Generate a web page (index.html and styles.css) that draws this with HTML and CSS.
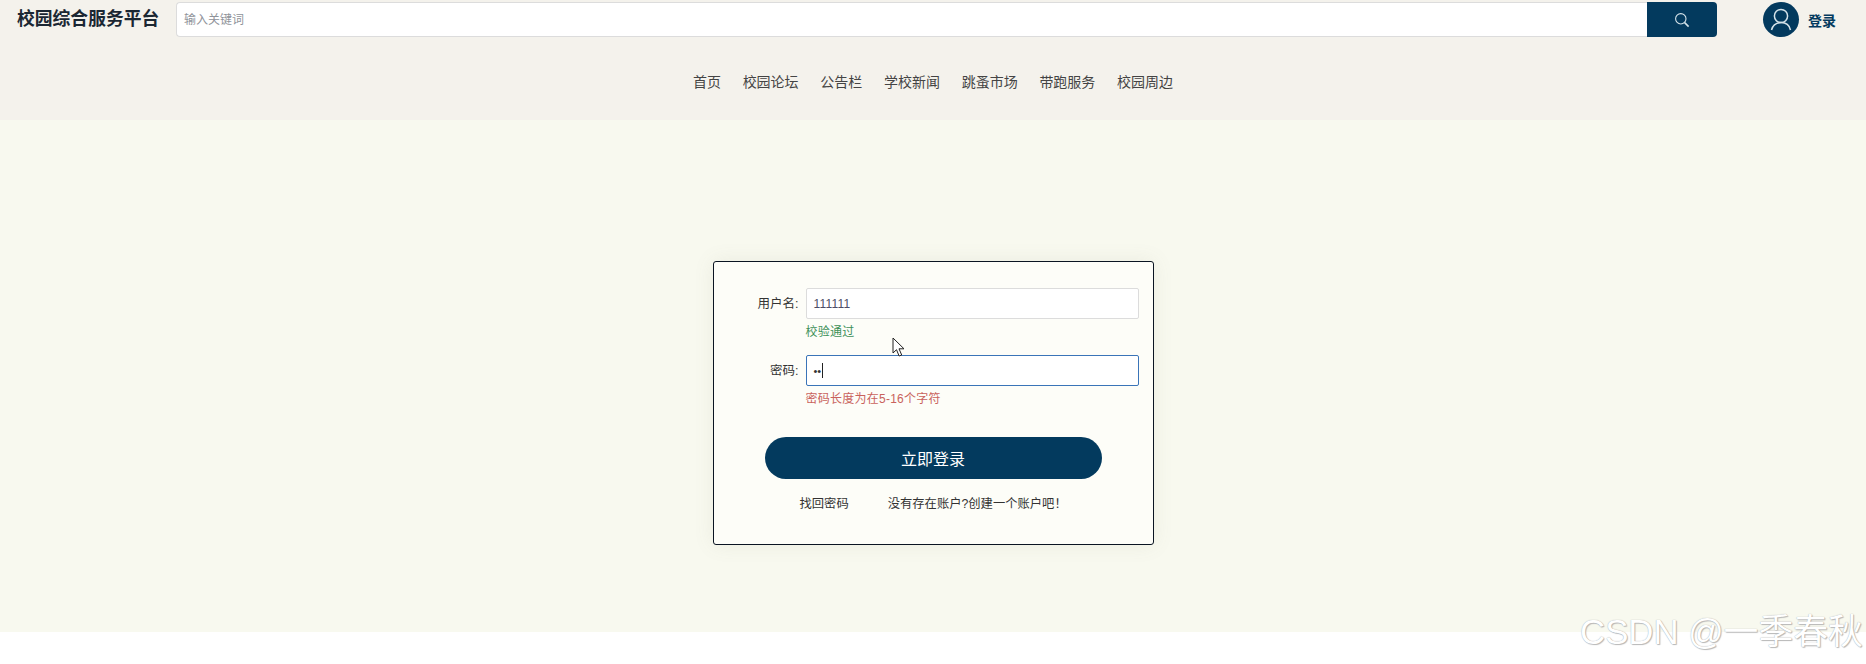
FILE: index.html
```html
<!DOCTYPE html>
<html lang="zh-CN">
<head>
<meta charset="utf-8">
<title>校园综合服务平台</title>
<link rel="stylesheet" href="styles.css">
</head>
<body>
<header class="header">
  <div class="topbar">
    <div class="logo">校园综合服务平台</div>
    <div class="search">
      <input class="search-input" type="text" placeholder="输入关键词">
      <button class="search-btn" type="button" aria-label="搜索">
        <svg width="16" height="16" viewBox="0 0 16 16" fill="none" stroke="#d5e3ea" stroke-width="1.1"><circle cx="6.8" cy="6.8" r="5.2"/><path d="M10.6 10.6l4 4" stroke-width="1.6"/></svg>
      </button>
    </div>
    <div class="user">
      <span class="avatar">
        <svg width="36" height="35" viewBox="0 0 36 35" fill="none" stroke="#d5e3ea" stroke-width="1.5"><circle cx="18" cy="14" r="6.6"/><path d="M8.5 28c1.2-5.2 5-7.4 9.5-7.4s8.3 2.2 9.5 7.4"/></svg>
      </span>
      <span class="user-name">登录</span>
    </div>
  </div>
  <nav class="nav">
    <a>首页</a><a>校园论坛</a><a>公告栏</a><a>学校新闻</a><a>跳蚤市场</a><a>带跑服务</a><a>校园周边</a>
  </nav>
</header>
<main class="main">
  <form class="card">
    <div class="row">
      <label class="label">用户名:</label>
      <div class="field">
        <div class="input">111111</div>
        <div class="msg msg-ok">校验通过</div>
      </div>
    </div>
    <div class="row">
      <label class="label">密码:</label>
      <div class="field">
        <div class="input input-focus"><span class="dots">••</span><span class="caret"></span></div>
        <div class="msg msg-err">密码长度为在5-16个字符</div>
      </div>
    </div>
    <button class="submit" type="button">立即登录</button>
    <div class="links"><a>找回密码</a><a>没有存在账户?创建一个账户吧！</a></div>
  </form>
</main>
<svg class="cursor" width="14" height="21" viewBox="0 0 14 21"><path d="M1 1v15l3.5-3.3 2.6 6.3 2.6-1-2.7-6.2H12z" fill="#fff" stroke="#222" stroke-width="1"/></svg>
<div class="watermark">CSDN @一季春秋</div>
</body>
</html>
```
FILE: styles.css
```css
* { box-sizing: border-box; }
html, body { margin: 0; padding: 0; height: 664px; overflow: hidden; background: #fff; }
body { font-family: "Liberation Sans", "Noto Sans CJK SC", sans-serif; color: #333; position: relative; }
.header { height: 120px; background: #f4f2ec; }
.topbar { display: flex; align-items: flex-start; height: 64px; padding-top: 2px; }
.logo { width: 176px; padding-left: 17px; height: 35px; line-height: 35px; font-size: 17.8px; font-weight: 700; color: #1b2733; white-space: nowrap; }
.search { display: flex; width: 1541px; height: 35px; }
.search-input { flex: 1; min-width: 0; height: 35px; margin: 0; padding: 0 7px; border: 1px solid #dcdcdc; border-right: 0; border-radius: 4px 0 0 4px; background: #fff; font: 12px "Liberation Sans", "Noto Sans CJK SC", sans-serif; outline: none; }
.search-input::placeholder { color: #8f939a; }
.search-btn { width: 70px; height: 35px; padding: 0; border: 0; border-radius: 0 4px 4px 0; background: #033a5e; display: flex; align-items: center; justify-content: center; }
.user { display: flex; align-items: center; gap: 9px; margin-left: 46px; height: 35px; }
.avatar { width: 36px; height: 35px; border-radius: 50%; background: #033a5e; display: block; flex: none; }
.avatar svg { display: block; }
.user-name { font-size: 14px; font-weight: 700; color: #033a5e; }
.nav { display: flex; justify-content: center; gap: 21.7px; font-size: 14px; line-height: 20px; color: #444; padding-top: 8px; }
.main { height: 512px; padding-top: 141px; background: #f8f9ef; }
.card { width: 441px; height: 284px; margin: 0 auto; padding: 26px 14px 0 0; background: #fdfdf8; border: 1px solid #0a1422; border-radius: 3px; box-shadow: 0 0 20px rgba(120, 120, 100, .1); }
.row { display: flex; height: 67px; }
.label { width: 85px; height: 32px; line-height: 32px; text-align: right; font-size: 12.5px; color: #333; }
.field { margin-left: 7px; flex: 1; }
.input { height: 31px; padding: 0 7px; border: 1px solid #dcdcdc; border-radius: 2px; background: #fff; font-size: 12px; letter-spacing: .2px; color: #4d4d66; display: flex; align-items: center; }
.input-focus { border-color: #3a74b8; }
.dots { font-size: 11px; letter-spacing: 0; color: #333; }
.caret { width: 1px; height: 15px; background: #222; margin-left: 1px; }
.msg { font-size: 12px; line-height: 16px; margin-top: 5px; letter-spacing: .25px; }
.msg-ok { color: #3e9158; }
.msg-err { color: #c9625c; }
.submit { display: block; width: 337px; height: 42px; margin: 15px 0 0 51px; padding: 0; border: 0; border-radius: 21px; background: #033a5e; color: #fff; font: 16px "Liberation Sans", "Noto Sans CJK SC", sans-serif; }
.links { display: flex; gap: 39px; margin: 16px 0 0 86px; font-size: 12.3px; line-height: 18px; color: #333; }
.cursor { position: absolute; left: 892px; top: 337px; }
.watermark { position: absolute; left: 1580px; top: 612px; font-size: 34.8px; line-height: 40px; color: #fff; white-space: nowrap; text-shadow: 0 0 1px #999, 1px 1px 1px #bbb; }
```
